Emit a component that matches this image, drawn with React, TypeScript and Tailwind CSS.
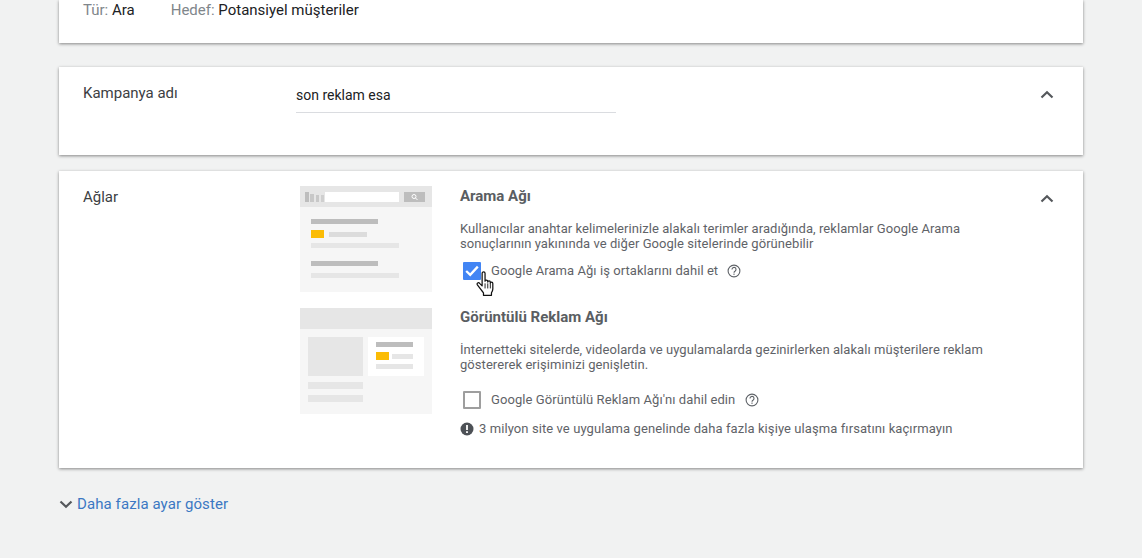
import React from "react";

const font = { fontFamily: "Roboto, sans-serif" };

function Chevron({ up, className }: { up?: boolean; className?: string }) {
  return (
    <svg width="14" height="9" viewBox="0 0 14 9" className={className}>
      <path d={up ? "M1.5 7.5 L7 2.2 L12.5 7.5" : "M1.5 1.5 L7 6.8 L12.5 1.5"} fill="none" stroke="#55585c" strokeWidth="2.2" />
    </svg>
  );
}

function Help() {
  return (
    <svg width="14" height="14" viewBox="0 0 14 14">
      <circle cx="7" cy="7" r="5.9" fill="none" stroke="#5f6368" strokeWidth="1.1" />
      <path d="M5 5.4a2 2 0 1 1 3.2 1.6c-.8.55-1.2.9-1.2 1.7" fill="none" stroke="#5f6368" strokeWidth="1.1" />
      <rect x="6.4" y="9.6" width="1.2" height="1.2" fill="#5f6368" />
    </svg>
  );
}

function SearchArt() {
  return (
    <svg width="132" height="106" viewBox="0 0 132 106" className="block">
      <rect width="132" height="106" fill="#f6f6f6" />
      <rect width="132" height="21" fill="#e6e6e6" />
      <rect x="5" y="6" width="4" height="10" fill="#bdbdbd" />
      <rect x="10" y="8" width="4" height="8" fill="#c8c8c8" />
      <rect x="16" y="9" width="3" height="7" fill="#c8c8c8" />
      <rect x="21" y="9" width="3" height="7" fill="#cfcfcf" />
      <rect x="25" y="6" width="74" height="10" fill="#ffffff" />
      <rect x="104" y="6" width="21" height="10" fill="#bdbdbd" />
      <circle cx="114" cy="10.5" r="2" fill="none" stroke="#ffffff" strokeWidth="1" />
      <path d="M115.5 12 L117.5 14" stroke="#ffffff" strokeWidth="1" />
      <rect x="11" y="33" width="67" height="5" fill="#bdbdbd" />
      <rect x="11" y="44" width="13" height="8" fill="#fbbc05" />
      <rect x="29" y="46" width="38" height="5" fill="#dcdcdc" />
      <rect x="11" y="57" width="88" height="5" fill="#e6e6e6" />
      <rect x="11" y="75" width="67" height="5" fill="#bdbdbd" />
      <rect x="11" y="87" width="88" height="5" fill="#e6e6e6" />
    </svg>
  );
}

function DisplayArt() {
  return (
    <svg width="132" height="106" viewBox="0 0 132 106" className="block">
      <rect width="132" height="106" fill="#f6f6f6" />
      <rect width="132" height="21" fill="#e6e6e6" />
      <rect x="8" y="29" width="55" height="39" fill="#e6e6e6" />
      <rect x="68" y="29" width="56" height="39" fill="#ffffff" />
      <rect x="76" y="34" width="37" height="5" fill="#bdbdbd" />
      <rect x="76" y="44" width="13" height="8" fill="#fbbc05" />
      <rect x="92" y="46" width="21" height="5" fill="#e6e6e6" />
      <rect x="76" y="56" width="37" height="5" fill="#e6e6e6" />
      <rect x="8" y="74" width="55" height="7" fill="#e6e6e6" />
      <rect x="8" y="87" width="55" height="7" fill="#e6e6e6" />
    </svg>
  );
}

function Cursor() {
  return (
    <svg width="21" height="27" viewBox="0 0 18 24" className="absolute left-[12px] top-[9px]">
      <path
        d="M6 2c0-1.6 2.6-1.6 2.6 0v7c0-1.3 2.4-1.3 2.4.2v.6c0-1.3 2.3-1.3 2.3.2v.8c0-1.2 2.2-1.1 2.2.4v4.8c0 1.5-.7 2.6-1.2 3.4v2.2H7.2v-2.2c-1-1.2-3-3.8-5.4-7-1-1.5.9-2.8 2.2-1.2l2 2z"
        fill="#ffffff"
        stroke="#111111"
        strokeWidth="1.1"
        strokeLinejoin="round"
      />
      <path d="M8.6 11v4.5M11 11v4.5M13.3 11v4.5" stroke="#111111" strokeWidth="0.8" />
    </svg>
  );
}

export default function App() {
  return (
    <div className="h-[558px] w-[1142px] overflow-hidden bg-[#f1f2f2] pl-[59px]" style={font}>
      <div className="flex w-[1024px] flex-col">
        <section className="flex h-[43px] gap-[36px] bg-white pl-[24px] text-[15px] leading-[20px] shadow-[0_1px_3px_rgba(0,0,0,0.45)]">
          <div>
            <span className="text-[#80868b]">Tür: </span>
            <span className="text-[#202124]">Ara</span>
          </div>
          <div>
            <span className="text-[#80868b]">Hedef: </span>
            <span className="text-[#202124]">Potansiyel müşteriler</span>
          </div>
        </section>

        <section className="mt-[24px] flex h-[88px] bg-white shadow-[0_1px_3px_rgba(0,0,0,0.45)]">
          <div className="w-[237px] pl-[24px] pt-[16px] text-[15px] leading-[20px] text-[#3c4043]">Kampanya adı</div>
          <div className="w-[320px] self-start">
            <div className="h-[46px] border-b border-[#dadce0] pt-[18px] text-[14px] leading-[20px] text-[#202124]">son reklam esa</div>
          </div>
          <div className="ml-auto pr-[29px] pt-[23px]">
            <Chevron up className="block" />
          </div>
        </section>

        <section className="mt-[16px] flex h-[297px] bg-white shadow-[0_1px_3px_rgba(0,0,0,0.45)]">
          <div className="w-[241px] pl-[24px] pt-[16px] text-[15px] leading-[20px] text-[#3c4043]">Ağlar</div>
          <div className="flex w-[160px] flex-col gap-[16px] pt-[15px]">
            <SearchArt />
            <DisplayArt />
          </div>
          <div className="w-[540px] text-[#5f6368]">
            <h2 className="pt-[15px] text-[15px] font-bold leading-[20px] text-[#5a5e62]">Arama Ağı</h2>
            <p className="mt-[15px] text-[13px] leading-[15px] tracking-[0.06px]">
              Kullanıcılar anahtar kelimelerinizle alakalı terimler aradığında, reklamlar Google Arama
              <br />
              sonuçlarının yakınında ve diğer Google sitelerinde görünebilir
            </p>
            <div className="relative mt-[11px] flex h-[18px] items-center">
              <div className="relative ml-[3px] h-[18px] w-[18px]">
                <div className="flex h-[18px] w-[18px] items-center justify-center rounded-[1px] bg-[#4285f4]">
                  <svg width="14" height="12" viewBox="0 0 14 12">
                    <path d="M1.2 6 L5.2 9.8 L12.8 1.6" fill="none" stroke="#ffffff" strokeWidth="2.3" />
                  </svg>
                </div>
                <Cursor />
              </div>
              <span className="ml-[10px] text-[13px] leading-[18px] tracking-[0.06px]">Google Arama Ağı iş ortaklarını dahil et</span>
              <span className="ml-[9px] flex">
                <Help />
              </span>
            </div>

            <h2 className="mt-[27px] text-[15px] font-bold leading-[20px] text-[#5a5e62]">Görüntülü Reklam Ağı</h2>
            <p className="mt-[15px] text-[13px] leading-[15px] tracking-[0.06px]">
              İnternetteki sitelerde, videolarda ve uygulamalarda gezinirlerken alakalı müşterilere reklam
              <br />
              göstererek erişiminizi genişletin.
            </p>
            <div className="mt-[19px] flex h-[18px] items-center">
              <div className="ml-[3px] h-[18px] w-[18px] rounded-[1px] border-2 border-[#9e9e9e]" />
              <span className="ml-[10px] text-[13px] leading-[18px] tracking-[0.08px]">Google Görüntülü Reklam Ağı'nı dahil edin</span>
              <span className="ml-[10px] flex">
                <Help />
              </span>
            </div>
            <div className="mt-[11px] flex h-[18px] items-center">
              <svg width="14" height="14" viewBox="0 0 14 14">
                <circle cx="7" cy="7" r="6.5" fill="#4d5156" />
                <rect x="6.1" y="3" width="1.8" height="5" fill="#ffffff" />
                <rect x="6.1" y="9.2" width="1.8" height="1.8" fill="#ffffff" />
              </svg>
              <span className="ml-[5px] text-[13px] leading-[18px] tracking-[0.086px]">3 milyon site ve uygulama genelinde daha fazla kişiye ulaşma fırsatını kaçırmayın</span>
            </div>
          </div>
          <div className="ml-auto pr-[29px] pt-[23px]">
            <Chevron up className="block" />
          </div>
        </section>

        <div className="mt-[26px] flex h-[20px] items-center">
          <Chevron />
          <span className="ml-[4px] text-[15px] leading-[20px] tracking-[0.09px] text-[#3b78c3]">Daha fazla ayar göster</span>
        </div>
      </div>
    </div>
  );
}
